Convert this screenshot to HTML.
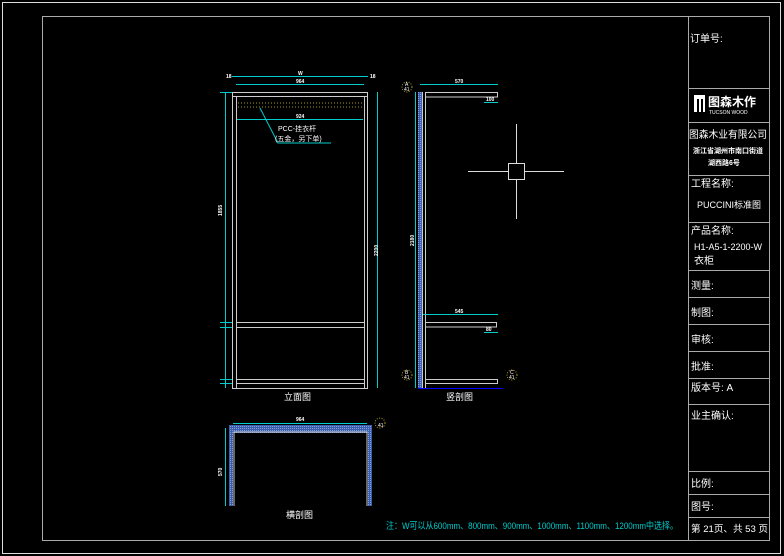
<!DOCTYPE html>
<html><head><meta charset="utf-8"><style>
html,body{margin:0;padding:0;background:#000;width:784px;height:556px;overflow:hidden}
svg{display:block}
text{font-family:"Liberation Sans","Noto Sans CJK SC",sans-serif}
</style></head><body>
<svg width="784" height="556" viewBox="0 0 784 556" xmlns="http://www.w3.org/2000/svg">
<defs>
<pattern id="h" width="2" height="2" patternUnits="userSpaceOnUse"><rect width="2" height="2" fill="#3a5fb0"/><rect width="1" height="1" fill="#8aa0d0"/></pattern>
</defs>
<rect x="2.5" y="2.5" width="778" height="551" fill="none" stroke="#ddd" stroke-width="1"/>
<rect x="42.5" y="16.5" width="727" height="524" fill="none" stroke="#aaa" stroke-width="1"/>
<g stroke="#aaa" stroke-width="1">
<line x1="688.5" y1="16" x2="688.5" y2="540"/>
<line x1="688" y1="88.5" x2="770" y2="88.5"/>
<line x1="688" y1="122.5" x2="770" y2="122.5"/>
<line x1="688" y1="175.5" x2="770" y2="175.5"/>
<line x1="688" y1="222.5" x2="770" y2="222.5"/>
<line x1="688" y1="270.5" x2="770" y2="270.5"/>
<line x1="688" y1="297.5" x2="770" y2="297.5"/>
<line x1="688" y1="324.5" x2="770" y2="324.5"/>
<line x1="688" y1="351.5" x2="770" y2="351.5"/>
<line x1="688" y1="378.5" x2="770" y2="378.5"/>
<line x1="688" y1="404.5" x2="770" y2="404.5"/>
<line x1="688" y1="471.5" x2="770" y2="471.5"/>
<line x1="688" y1="494.5" x2="770" y2="494.5"/>
<line x1="688" y1="517.5" x2="770" y2="517.5"/>
</g>
<g fill="#fff" font-size="10">
<text x="690" y="42">订单号:</text>
<rect x="694" y="95" width="11" height="17" fill="#fff"/>
<rect x="697" y="99" width="2" height="13" fill="#000"/><rect x="701" y="99" width="2" height="13" fill="#000"/>
<text x="708" y="106" font-size="12" font-weight="bold">图森木作</text>
<text x="709" y="114" font-size="5">TUCSON WOOD</text>
<text x="689" y="138" font-size="10" textLength="78" lengthAdjust="spacingAndGlyphs">图森木业有限公司</text>
<text x="693" y="153" font-size="7" font-weight="bold">浙江省湖州市南口街道</text>
<text x="708" y="165" font-size="7" font-weight="bold">湖西路6号</text>
<text x="691" y="187">工程名称:</text>
<text x="697" y="208" font-size="9">PUCCINI标准图</text>
<text x="691" y="234">产品名称:</text>
<text x="694" y="250" font-size="9" textLength="68" lengthAdjust="spacingAndGlyphs">H1-A5-1-2200-W</text>
<text x="694" y="264">衣柜</text>
<text x="691" y="289">测量:</text>
<text x="691" y="316">制图:</text>
<text x="691" y="343">审核:</text>
<text x="691" y="370">批准:</text>
<text x="691" y="391">版本号: A</text>
<text x="691" y="419">业主确认:</text>
<text x="691" y="487">比例:</text>
<text x="691" y="510">图号:</text>
<text x="691" y="532" font-size="9.5" textLength="77" lengthAdjust="spacingAndGlyphs">第 21页、共 53 页</text>
</g>
<g fill="none" stroke="#ccc" stroke-width="1">
<rect x="232.5" y="92.5" width="135" height="296"/>
<line x1="236.5" y1="96" x2="236.5" y2="388"/>
<line x1="364.5" y1="96" x2="364.5" y2="388"/>
<line x1="232" y1="96.5" x2="368" y2="96.5"/>
<line x1="236" y1="322.5" x2="364" y2="322.5"/>
<line x1="236" y1="327.5" x2="364" y2="327.5"/>
<line x1="236" y1="379.5" x2="364" y2="379.5"/>
<line x1="236" y1="383.5" x2="364" y2="383.5"/>
</g>
<g stroke="#aa9a20" stroke-dasharray="1,2" fill="none">
<line x1="238" y1="103" x2="362" y2="103"/><line x1="238" y1="107" x2="362" y2="107"/>
</g>
<g stroke="#0cc" stroke-width="1" fill="none">
<line x1="232" y1="76.5" x2="368" y2="76.5"/>
<line x1="236" y1="84.5" x2="364" y2="84.5"/>
<line x1="237" y1="119.5" x2="363" y2="119.5"/>
<line x1="225.5" y1="92" x2="225.5" y2="388"/>
<line x1="377.5" y1="92" x2="377.5" y2="388"/>
<polyline points="260,108 278,143 331,143"/>
<line x1="220" y1="92.5" x2="232" y2="92.5"/><line x1="220" y1="322.5" x2="232" y2="322.5"/><line x1="220" y1="327.5" x2="232" y2="327.5"/><line x1="220" y1="379.5" x2="232" y2="379.5"/><line x1="220" y1="383.5" x2="232" y2="383.5"/>
</g>
<g fill="#fff" font-size="5" font-weight="bold">
<text x="298" y="75">W</text><text x="296" y="83">964</text><text x="296" y="118">924</text>
<text x="226" y="78">18</text><text x="370" y="78">18</text>
<text x="216" y="210" transform="rotate(-90 222 210)">1855</text>
<text x="372" y="250" transform="rotate(-90 378 250)">2200</text>
</g>
<text x="278" y="131" fill="#fff" font-size="7">PCC-挂衣杆</text>
<text x="275" y="141" fill="#fff" font-size="7">(五金，另下单)</text>
<text x="284" y="400" fill="#fff" font-size="9">立面图</text>
<rect x="418" y="92" width="4" height="296" fill="url(#h)"/>
<g fill="none" stroke="#ccc" stroke-width="1">
<line x1="422.5" y1="92" x2="422.5" y2="388"/>
<line x1="425.5" y1="97" x2="425.5" y2="388"/>
<rect x="425.5" y="92.5" width="72" height="4.5"/>
<rect x="425.5" y="322.5" width="71" height="4.5"/>
<rect x="425.5" y="379.5" width="72" height="4"/>
</g>
<line x1="418" y1="388.5" x2="503" y2="388.5" stroke="#00f" stroke-width="1"/>
<g stroke="#0cc" fill="none">
<line x1="420" y1="84.5" x2="498" y2="84.5"/>
<line x1="415.5" y1="92" x2="415.5" y2="388"/>
<line x1="423" y1="314.5" x2="498" y2="314.5"/>
<line x1="484" y1="102.5" x2="498" y2="102.5"/>
<line x1="484" y1="332.5" x2="498" y2="332.5"/>
</g>
<g fill="#fff" font-size="5" font-weight="bold"><text x="455" y="83">570</text><text x="455" y="313">545</text><text x="486" y="101">100</text><text x="486" y="331">80</text>
<text x="408" y="240" transform="rotate(-90 414 240)">2180</text></g>
<g fill="none" stroke="#aa9a20" stroke-dasharray="1,1.5">
<circle cx="407" cy="87" r="5"/><circle cx="407" cy="375" r="5"/><circle cx="512" cy="375" r="5"/>
</g>
<g fill="#fff" font-size="5"><text x="405" y="86">A</text><text x="404" y="91">41</text><text x="405" y="374">B</text><text x="404" y="379">41</text><text x="510" y="374">C</text><text x="509" y="379">41</text></g>
<text x="446" y="400" fill="#fff" font-size="9">竖剖图</text>
<g stroke="#ddd" fill="none"><line x1="468" y1="171.5" x2="564" y2="171.5"/><line x1="516.5" y1="124" x2="516.5" y2="219"/><rect x="508.5" y="163.5" width="16" height="16" fill="#000"/></g>
<path d="M229 425 H372 V506 H368 V433 H233 V506 H229 Z" fill="url(#h)"/>
<g stroke="#ccc" fill="none"><polyline points="234,506 234,432 367,432 367,506"/></g>
<g stroke="#0cc" fill="none"><line x1="233" y1="423.5" x2="367" y2="423.5"/><line x1="225.5" y1="428" x2="225.5" y2="506"/></g>
<g fill="#fff" font-size="5" font-weight="bold"><text x="296" y="421">964</text><text x="216" y="470" transform="rotate(-90 222 470)">570</text></g>
<circle cx="380" cy="423" r="5" fill="none" stroke="#aa9a20" stroke-dasharray="1,1.5"/>
<text x="378" y="427" fill="#fff" font-size="5">41</text>
<text x="286" y="518" fill="#fff" font-size="9">横剖图</text>
<text x="386" y="529" fill="#0cc" font-size="9.5" textLength="292" lengthAdjust="spacingAndGlyphs">注：W可以从600mm、800mm、900mm、1000mm、1100mm、1200mm中选择。</text>
</svg>
</body></html>
